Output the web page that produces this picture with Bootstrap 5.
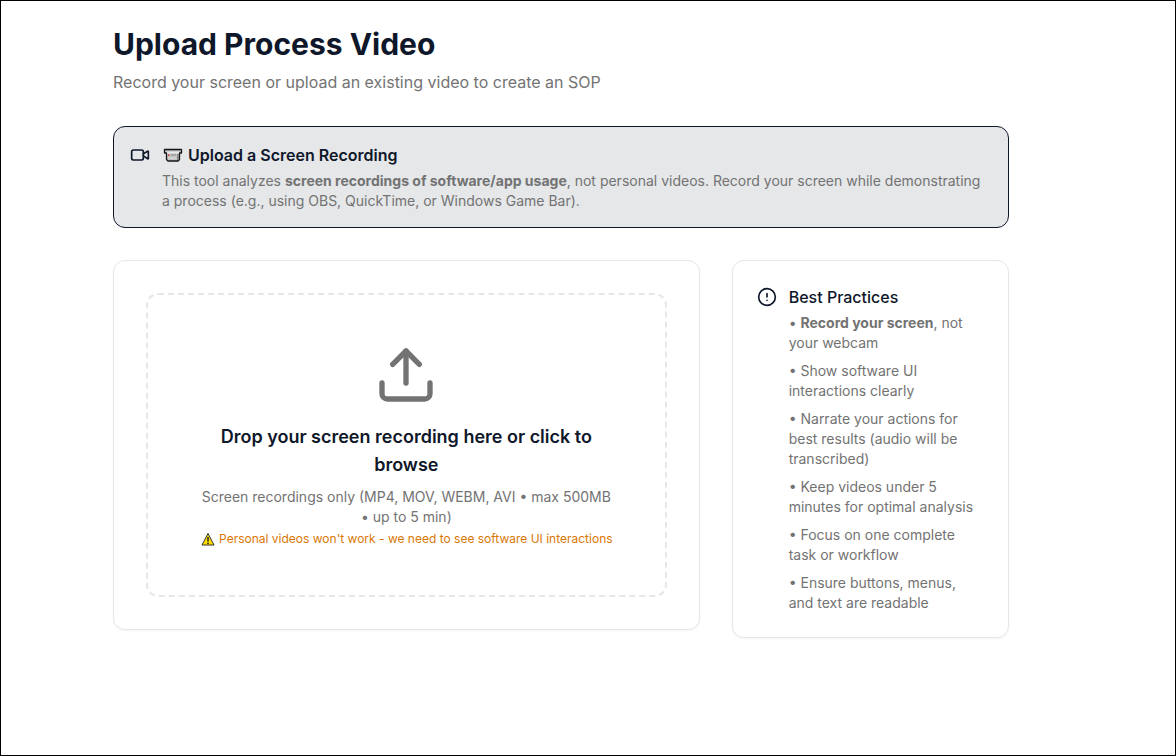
<!DOCTYPE html>
<html lang="en">
<head>
<meta charset="utf-8">
<meta name="viewport" content="width=device-width, initial-scale=1">
<title>Upload Process Video</title>
<link href="https://cdn.jsdelivr.net/npm/bootstrap@5.3.0/dist/css/bootstrap.min.css" rel="stylesheet">
<style>
  :root { --ink: #0f172a; --muted: #737373; --line: #e5e7eb; }
  body { font-family: Inter, sans-serif; color: var(--ink); background: #fff; font-size: 16px; line-height: 24px; }
  .page-frame { border: 1px solid #000; }
  .page-main { max-width: 1008px; padding: 25px 0 48px 112px; }
  h1 { font-size: 30px; line-height: 36px; font-weight: 700; }
  h2 { font-size: 16px; line-height: 24px; }
  .drop-title { font-size: 18px; line-height: 28px; font-weight: 600; }
  .soft { color: var(--muted); }
  .copy { font-size: 14px; line-height: 20px; color: var(--muted); }
  .notice { background: #e5e7e9; border: 1px solid var(--ink); border-radius: 12px; gap: 12px; margin: 32px 0; }
  .panel { background: #fff; border: 1px solid var(--line); border-radius: 12px; box-shadow: 0 1px 2px rgba(0,0,0,.05); }
  .panel-wide { padding: 32px; }
  .panel-side { padding: 24px; gap: 12px; }
  .columns { --bs-gutter-x: 32px; --bs-gutter-y: 32px; }
  .dropzone { border: 2px dashed var(--line); border-radius: 12px; padding: 48px; cursor: pointer; }
  .warn { font-size: 12px; line-height: 16px; color: #d97706; }
  .tips li + li { margin-top: 8px; }
  .line-icon { fill: none; stroke: currentColor; stroke-width: 2; stroke-linecap: round; stroke-linejoin: round; }
</style>
</head>
<body>
<div class="page-frame min-vh-100">
  <main class="page-main">
    <header>
      <h1 class="mb-2">Upload Process Video</h1>
      <p class="soft mb-0">Record your screen or upload an existing video to create an SOP</p>
    </header>

    <section class="notice d-flex align-items-start p-3">
      <svg class="line-icon flex-shrink-0" width="20" height="24" viewBox="0 0 24 24" aria-hidden="true"><path d="m16 13 5.223 3.482a.5.5 0 0 0 .777-.416V7.87a.5.5 0 0 0-.752-.432L16 10.500"/><rect x="2" y="6" width="14" height="12" rx="2"/></svg>
      <div>
        <h2 class="fw-semibold d-flex align-items-center gap-1 mb-1">
          <svg width="22" height="16" viewBox="0 0 22 16" aria-hidden="true">
            <path d="M2.500 2.500h17v3.500h-2v6.500l-1.500 1.500H6l-1.500-1.500V6h-2z" fill="#c4c4c4" stroke="#151515" stroke-width="1.300" stroke-linejoin="round"/>
            <path d="M3 3h16v1H3z" fill="#8d8d8d"/>
            <path d="M5 4.500h12v2H5z" fill="#e9e9e9"/>
            <path d="M15 7h2v5l-1 1h-1z" fill="#8b8b8b"/>
            <path d="M6 7.500h1.500V9H6z" fill="#d33"/>
            <path d="M9 8h5" stroke="#8a8a8a"/>
            <path d="M6 11h8" stroke="#ddd"/>
          </svg>
          <span>Upload a Screen Recording</span>
        </h2>
        <p class="copy mb-0">This tool analyzes <strong class="fw-bold">screen recordings of software/app usage</strong>, not personal videos. Record your screen while demonstrating a process (e.g., using OBS, QuickTime, or Windows Game Bar).</p>
      </div>
    </section>

    <div class="row columns align-items-start mt-0">
      <div class="col-md-8 mt-0">
        <div class="panel panel-wide">
          <input type="file" id="recording" class="visually-hidden" accept="video/*">
          <label for="recording" class="dropzone d-block text-center">
            <svg class="line-icon soft d-block mx-auto mb-3" width="64" height="64" viewBox="0 0 24 24" aria-hidden="true"><path d="M21 15v4a2 2 0 0 1-2 2H5a2 2 0 0 1-2-2v-4"/><path d="m17 8-5-5-5 5"/><path d="M12 3v12"/></svg>
            <span class="drop-title d-block mb-2">Drop your screen recording here or click to browse</span>
            <span class="copy d-block mb-1">Screen recordings only (MP4, MOV, WEBM, AVI • max 500MB • up to 5 min)</span>
            <span class="warn d-flex justify-content-center align-items-center gap-1">
              <svg width="15" height="14" viewBox="0 0 15 14" aria-hidden="true"><path d="M8 1.500 14 13H2z" fill="#fd0" stroke="#333" stroke-linejoin="round"/><path d="M8 5v4.500M8 10.500V12" stroke="#222" stroke-width="1.500"/></svg>
              <span>Personal videos won't work - we need to see software UI interactions</span>
            </span>
          </label>
        </div>
      </div>
      <div class="col-md-4 mt-0">
        <aside class="panel panel-side d-flex align-items-start">
          <svg class="line-icon flex-shrink-0" width="20" height="24" viewBox="0 0 24 24" aria-hidden="true"><circle cx="12" cy="12" r="10"/><path d="M12 8v4M12 16h.01"/></svg>
          <div>
            <h2 class="fw-medium mb-1">Best Practices</h2>
            <ul class="tips copy list-unstyled mb-0">
              <li>• <strong class="fw-bold">Record your screen</strong>, not your webcam</li>
              <li>• Show software UI interactions clearly</li>
              <li>• Narrate your actions for best results (audio will be transcribed)</li>
              <li>• Keep videos under 5 minutes for optimal analysis</li>
              <li>• Focus on one complete task or workflow</li>
              <li>• Ensure buttons, menus, and text are readable</li>
            </ul>
          </div>
        </aside>
      </div>
    </div>
  </main>
</div>
<script src="https://cdn.jsdelivr.net/npm/bootstrap@5.3.0/dist/js/bootstrap.bundle.min.js"></script>
</body>
</html>
